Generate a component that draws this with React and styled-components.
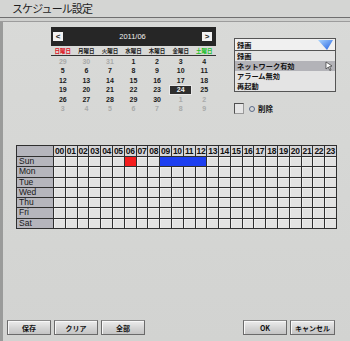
import React from "react";
import styled, { createGlobalStyle } from "styled-components";

const Global = createGlobalStyle`
  html, body { margin: 0; padding: 0; background: #d5d6d4; }
  * { box-sizing: border-box; }
`;

const FONT = `"Liberation Sans", "Noto Sans CJK JP", sans-serif`;

const Screen = styled.div`
  width: 350px;
  height: 341px;
  display: flex;
  flex-direction: column;
  background: linear-gradient(180deg, #d9dad8 0%, #d2d3d1 100%);
  font-family: ${FONT};
  color: #111;
  overflow: hidden;
`;

const TitleBar = styled.div`
  height: 18px;
  padding-left: 12px;
  font-family: "Noto Sans CJK JP", sans-serif;
  font-size: 11px;
  letter-spacing: -0.9px;
  line-height: 17px;
  color: #1e1e1e;
  background: #d4d5d3;
  border-bottom: 1px solid #6f6f6f;
`;

const SubBar = styled.div`
  height: 4px;
  background: #cfd0ce;
  border-bottom: 1px solid #9c9c9c;
`;

const Body = styled.div`
  flex: 1;
  display: flex;
  flex-direction: column;
  border-left: 3px solid #9a9b9a;
  padding: 5px 0 6px 0;
`;

const TopRow = styled.div`
  display: flex;
  align-items: flex-start;
  padding-left: 48px;
  gap: 18px;
`;

const Calendar = styled.div`
  width: 165px;
`;

const CalHeader = styled.div`
  height: 19px;
  background: #262626;
  display: flex;
  align-items: center;
  justify-content: space-between;
  padding: 0 4px 0 2px;
`;

const ArrowBtn = styled.div`
  width: 10px;
  height: 9px;
  background: #f2f2f2;
  color: #222;
  font-size: 8px;
  font-weight: bold;
  line-height: 9px;
  text-align: center;
`;

const MonthLabel = styled.div`
  color: #f0f0f0;
  font-size: 7.5px;
`;

const WeekRow = styled.div`
  display: grid;
  grid-template-columns: repeat(7, 1fr);
  height: 10px;
  border-bottom: 1px solid #333;
  padding-top: 2px;
`;

const WeekDay = styled.div`
  text-align: center;
  font-family: "Noto Sans CJK JP", sans-serif;
  font-size: 5.5px;
  line-height: 7px;
  font-weight: bold;
  color: ${(p) => p.$color || "#1a1a1a"};
`;

const DateGrid = styled.div`
  display: grid;
  grid-template-columns: repeat(7, 1fr);
  grid-auto-rows: 9.5px;
  padding-top: 0.5px;
`;

const DateCell = styled.div`
  display: flex;
  align-items: center;
  justify-content: center;
  font-size: 7px;
  font-weight: bold;
  color: ${(p) => (p.$muted ? "#a9aaa9" : p.$selected ? "#eee" : "#1a1a1a")};
  background: ${(p) => (p.$selected ? "#2e2e2e" : "transparent")};
  outline: ${(p) => (p.$selected ? "1px solid #e8e8e8" : "none")};
  outline-offset: -1px;
`;

const SidePanel = styled.div`
  margin-top: 11px;
  display: flex;
  flex-direction: column;
  gap: 11px;
`;

const Dropdown = styled.div`
  width: 102px;
  border: 1px solid #555;
  background: #e4e4e4;
  font-family: "Noto Sans CJK JP", sans-serif;
  font-size: 7.2px;
  font-weight: bold;
`;

const DropHead = styled.div`
  height: 12px;
  display: flex;
  align-items: center;
  justify-content: space-between;
  padding: 0 2px 0 2px;
  background: #f0f0f0;
  border-bottom: 1px solid #555;
`;

const Option = styled.div`
  position: relative;
  height: 10px;
  line-height: 10px;
  padding-left: 2px;
  background: ${(p) => (p.$active ? "#b3b3b8" : "transparent")};
`;

const Cursor = styled.svg`
  position: absolute;
  right: 2px;
  top: 0px;
`;

const CheckRow = styled.div`
  display: flex;
  align-items: center;
  gap: 5px;
  font-family: "Noto Sans CJK JP", sans-serif;
  font-size: 7.5px;
  font-weight: bold;
`;

const CheckBox = styled.div`
  width: 10px;
  height: 11px;
  border: 1px solid #505050;
  border-right-color: #9a9a9a;
  border-bottom-color: #9a9a9a;
  background: #e6e6e6;
`;

const Radio = styled.div`
  width: 6px;
  height: 6px;
  border-radius: 50%;
  border: 1px solid #5a6a8a;
  margin-right: -2px;
`;

const Schedule = styled.div`
  margin: 31px 0 0 13px;
  width: 321px;
  height: 84px;
  display: grid;
  grid-template-columns: 36px repeat(24, 1fr);
  grid-template-rows: 10px repeat(7, 1fr);
  gap: 1px;
  padding: 1px;
  background: #2f2f2f;
`;

const Corner = styled.div`
  background: #b5b5bc;
`;

const HourHead = styled.div`
  background: #d6d6d8;
  font-size: 8.5px;
  font-weight: bold;
  line-height: 10px;
  text-align: center;
  letter-spacing: -0.3px;
`;

const DayLabel = styled.div`
  background: #b5b5bc;
  font-size: 8.5px;
  line-height: 9px;
  padding-left: 2px;
  color: #1a1a1a;
`;

const Slot = styled.div`
  grid-column: span ${(p) => p.$span || 1};
  background: ${(p) => p.$fill || "#e3e3e2"};
  box-shadow: ${(p) => (p.$fill ? "none" : "inset 1px 1px 0 #efefee")};
`;

const Footer = styled.div`
  margin-top: auto;
  display: flex;
  justify-content: space-between;
  padding: 0 15px 0 4px;
`;

const BtnGroup = styled.div`
  display: flex;
  gap: ${(p) => p.$gap || 3}px;
`;

const Button = styled.div`
  width: ${(p) => p.$w || 44}px;
  height: 15px;
  display: flex;
  align-items: center;
  justify-content: center;
  background: linear-gradient(180deg, #ececec 0%, #d2d2d2 60%, #c4c4c4 100%);
  border: 1px solid #6a6a6a;
  border-top-color: #8a8a8a;
  box-shadow: inset 1px 1px 0 #f8f8f8;
  font-family: "Noto Sans CJK JP", sans-serif;
  font-size: 7px;
  font-weight: bold;
  color: #111;
`;

const weekDays = [
  { label: "日曜日", color: "#e0101c" },
  { label: "月曜日" },
  { label: "火曜日" },
  { label: "水曜日" },
  { label: "木曜日" },
  { label: "金曜日" },
  { label: "土曜日", color: "#22c02a" },
];

const dates = [
  [29, true], [30, true], [31, true], [1], [2], [3], [4],
  [5], [6], [7], [8], [9], [10], [11],
  [12], [13], [14], [15], [16], [17], [18],
  [19], [20], [21], [22], [23], [24, false, true], [25],
  [26], [27], [28], [29], [30], [1, true], [2, true],
  [3, true], [4, true], [5, true], [6, true], [7, true], [8, true], [9, true],
];

const days = ["Sun", "Mon", "Tue", "Wed", "Thu", "Fri", "Sat"];
const hours = Array.from({ length: 24 }, (_, i) => String(i).padStart(2, "0"));

const segments = {
  Sun: [
    { start: 6, span: 1, fill: "#f41d1d" },
    { start: 9, span: 4, fill: "#1d3ff0" },
  ],
};

function rowSlots(day) {
  const segs = segments[day] || [];
  const out = [];
  let h = 0;
  while (h < 24) {
    const seg = segs.find((s) => s.start === h);
    if (seg) {
      out.push(<Slot key={h} $span={seg.span} $fill={seg.fill} />);
      h += seg.span;
    } else {
      out.push(<Slot key={h} />);
      h += 1;
    }
  }
  return out;
}

export default function App() {
  return (
    <>
      <Global />
      <Screen>
        <TitleBar>スケジュール設定</TitleBar>
        <SubBar />
        <Body>
          <TopRow>
            <Calendar>
              <CalHeader>
                <ArrowBtn>&lt;</ArrowBtn>
                <MonthLabel>2011/06</MonthLabel>
                <ArrowBtn>&gt;</ArrowBtn>
              </CalHeader>
              <WeekRow>
                {weekDays.map((d) => (
                  <WeekDay key={d.label} $color={d.color}>
                    {d.label}
                  </WeekDay>
                ))}
              </WeekRow>
              <DateGrid>
                {dates.map(([n, muted, sel], i) => (
                  <DateCell key={i} $muted={muted} $selected={sel}>
                    {n}
                  </DateCell>
                ))}
              </DateGrid>
            </Calendar>
            <SidePanel>
              <Dropdown>
                <DropHead>
                  <span>録画</span>
                  <svg width="15" height="10" viewBox="0 0 15 10">
                    <defs>
                      <linearGradient id="tri" x1="0" y1="0" x2="1" y2="1">
                        <stop offset="0" stopColor="#a9d4ff" />
                        <stop offset="1" stopColor="#1f5fe0" />
                      </linearGradient>
                    </defs>
                    <polygon points="0,0 15,0 9,10" fill="url(#tri)" />
                  </svg>
                </DropHead>
                <Option>録画</Option>
                <Option $active>
                  ネットワーク有効
                  <Cursor width="8" height="10" viewBox="0 0 8 10">
                    <polygon
                      points="1,1 7,5 4.5,5.5 6,9 4.8,9.5 3.4,6 1,8"
                      fill="#fff"
                      stroke="#333"
                      strokeWidth="0.7"
                    />
                  </Cursor>
                </Option>
                <Option>アラーム無効</Option>
                <Option>再起動</Option>
              </Dropdown>
              <CheckRow>
                <CheckBox />
                <Radio />
                <span>削除</span>
              </CheckRow>
            </SidePanel>
          </TopRow>

          <Schedule>
            <Corner />
            {hours.map((h) => (
              <HourHead key={h}>{h}</HourHead>
            ))}
            {days.map((d) => (
              <React.Fragment key={d}>
                <DayLabel>{d}</DayLabel>
                {rowSlots(d)}
              </React.Fragment>
            ))}
          </Schedule>

          <Footer>
            <BtnGroup $gap={3}>
              <Button>保存</Button>
              <Button>クリア</Button>
              <Button>全部</Button>
            </BtnGroup>
            <BtnGroup $gap={3}>
              <Button>OK</Button>
              <Button $w={45}>キャンセル</Button>
            </BtnGroup>
          </Footer>
        </Body>
      </Screen>
    </>
  );
}
